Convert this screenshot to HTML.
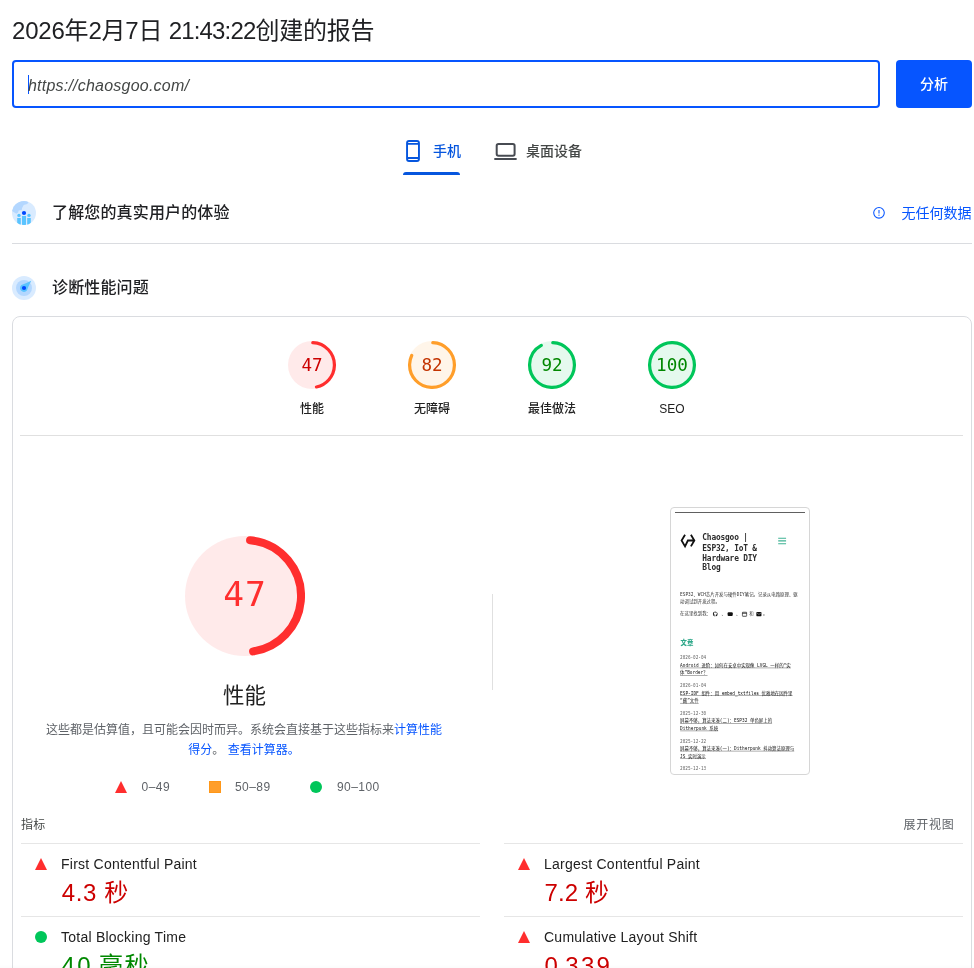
<!DOCTYPE html>
<html lang="zh-CN">
<head>
<meta charset="utf-8">
<title>PageSpeed Insights</title>
<style>
*{box-sizing:border-box;margin:0;padding:0}
html,body{width:974px;height:968px;overflow:hidden;background:#fff}
body{position:relative;font-family:"Liberation Sans","Noto Sans CJK SC",sans-serif;color:#202124;-webkit-font-smoothing:antialiased}
.abs{position:absolute;white-space:nowrap}
.mono{font-family:"DejaVu Sans Mono","Liberation Mono","Noto Sans CJK SC",monospace}
.hr{position:absolute;height:1px;background:#dadce0}
.title{left:12px;top:12.5px;font-size:24px;line-height:36px;color:#202124;letter-spacing:-0.2px}
.urlbox{left:12px;top:60px;width:868px;height:48px;border:2px solid #0655ff;border-radius:4px;background:#fff}
.urltext{left:28px;top:73.5px;font-size:16px;line-height:24px;font-style:italic;color:#444746;letter-spacing:.22px}
.caret{left:28px;top:75px;width:1px;height:19px;background:#0655ff}
.btn{left:896px;top:60px;width:76px;height:48px;border-radius:4px;background:#0655ff;color:#fff;font-size:14px;line-height:48px;text-align:center;font-weight:500}
.tab{font-size:14px;line-height:20px;font-weight:500}
.sec{font-size:16px;line-height:24px;color:#202124;font-weight:500;letter-spacing:.15px}
.card{position:absolute;left:12px;top:316px;width:960px;height:700px;border:1px solid #dadce0;border-radius:8px}
.glabel{font-size:12px;line-height:16px;color:#212121;text-align:center;width:120px;font-weight:500}
.gnum{font-size:17.6px;line-height:20px;text-align:center;width:60px}
.small{font-size:12px;line-height:20px;color:#5f6368}
.mlabel{font-size:14px;line-height:20px;color:#212121;letter-spacing:.24px}
.mval{font-size:24px;line-height:32px;letter-spacing:.6px}
a{color:#0655ff;text-decoration:none}
.tmono{font-family:"DejaVu Sans Mono","Liberation Mono","Noto Sans CJK SC",monospace}
.tp{font-family:"DejaVu Sans Mono","Liberation Mono","Noto Sans CJK SC",monospace;font-size:13.2px;line-height:20px;color:#333}
.td{font-family:"DejaVu Sans Mono","Liberation Mono","Noto Sans CJK SC",monospace;font-size:12.9px;line-height:20px;color:#666}
.ta{font-family:"DejaVu Sans Mono","Liberation Mono","Noto Sans CJK SC",monospace;font-size:13.2px;line-height:20px;color:#111;text-decoration:underline;text-underline-offset:3px;text-decoration-thickness:1.2px}
</style>
</head>
<body>
<div id="root" style="position:absolute;left:0;top:0;width:974px;height:968px;will-change:transform">

<div class="abs title">2026年2月7日 <span style="letter-spacing:-0.85px">21:43:22</span>创建的报告</div>

<div class="abs urlbox"></div>
<div class="abs caret"></div>
<div class="abs urltext">https://chaosgoo.com/</div>
<div class="abs btn">分析</div>

<!-- tabs -->
<svg class="abs" style="left:403px;top:139px" width="20" height="24" viewBox="0 0 20 24"><rect x="4.050" y="1.950" width="11.900" height="20" rx="2" fill="none" stroke="#0656de" stroke-width="1.900"/><path d="M4 4.900H16M4 19H16" stroke="#0656de" stroke-width="1.900"/></svg>
<div class="abs tab" style="left:433px;top:141px;color:#0656de">手机</div>
<div class="abs" style="left:403px;top:172px;width:57px;height:3px;background:#0656de;border-radius:3px 3px 0 0"></div>
<svg class="abs" style="left:494px;top:141px" width="24" height="20" viewBox="0 0 24 20"><rect x="2.700" y="3" width="17.900" height="11.800" rx="1.800" fill="none" stroke="#474b52" stroke-width="2"/><path d="M.3 18H22.650" stroke="#474b52" stroke-width="2"/></svg>
<div class="abs tab" style="left:526px;top:141px;color:#444746">桌面设备</div>

<!-- section 1 -->
<svg class="abs" style="left:12px;top:201px" width="24" height="24" viewBox="0 0 24 24">
<defs><clipPath id="c1"><circle cx="12" cy="12" r="12"/></clipPath></defs>
<circle cx="12" cy="12" r="12" fill="#d9ebff"/>
<g clip-path="url(#c1)">
<path d="M-1 9.300L4.300 12.800L6.100 11.500L6.700 9.600L9.700 9L10.100 6.900L11.700 4L15.300 3.100L16.600 .85L12-1L-1-1Z" fill="#b3d7ff"/>
<rect x="5.2" y="17" width="3.6" height="8" fill="#5ac4ff"/>
<rect x="10" y="15" width="4" height="10" fill="#5ac4ff"/>
<rect x="15.2" y="17" width="3.6" height="8" fill="#5ac4ff"/>
<circle cx="7" cy="14.4" r="1.7" fill="#5ac4ff"/>
<circle cx="17" cy="14.4" r="1.7" fill="#5ac4ff"/>
<circle cx="12" cy="12" r="2.1" fill="#0048ff"/>
</g>
</svg>
<div class="abs sec" style="left:52px;top:200.8px">了解您的真实用户的体验</div>
<svg class="abs" style="left:872px;top:206px" width="14" height="14" viewBox="0 0 14 14"><circle cx="7" cy="6.800" r="5.300" fill="none" stroke="#0655ff" stroke-width="1.050"/><path d="M7 4.100V7.500" stroke="#0655ff" stroke-width="1.050"/><circle cx="7" cy="9.200" r=".62" fill="#0655ff"/></svg>
<div class="abs" style="left:901.4px;top:203px;font-size:14px;line-height:20px;color:#0655ff;font-weight:400;letter-spacing:.05px">无任何数据</div>
<div class="hr" style="left:12px;top:243px;width:960px"></div>

<!-- section 2 -->
<svg class="abs" style="left:12px;top:276px" width="24" height="24" viewBox="0 0 24 24">
<circle cx="12" cy="12" r="12" fill="#d9ebff"/>
<circle cx="12" cy="12" r="8" fill="#b3d7ff"/>
<path d="M19.200 4.800Q16.500 10 14.900 14.600A3.900 3.900 0 1 1 9.400 9.100Q14 7.500 19.200 4.800Z" fill="#5ac4ff"/>
<circle cx="12" cy="12" r="2.1" fill="#0048ff"/>
</svg>
<div class="abs sec" style="left:52px;top:275.8px">诊断性能问题</div>

<div class="card"></div>

<!-- gauges -->
<svg class="abs" style="left:288px;top:341px" width="48" height="48" viewBox="0 0 120 120"><circle cx="60" cy="60" r="60" fill="#ff2e2e" fill-opacity="0.1"/><circle cx="60" cy="60" r="56" fill="none" stroke="#ff2e2e" stroke-width="8" stroke-linecap="round" stroke-dasharray="161.37 351.86" transform="rotate(-87.9537 60 60)"/></svg>
<div class="abs mono gnum" style="left:282px;top:355px;color:#cc0000">47</div>
<div class="abs glabel" style="left:252px;top:401px">性能</div>
<svg class="abs" style="left:408px;top:341px" width="48" height="48" viewBox="0 0 120 120"><circle cx="60" cy="60" r="60" fill="#ff9e2a" fill-opacity="0.1"/><circle cx="60" cy="60" r="56" fill="none" stroke="#ff9e2a" stroke-width="8" stroke-linecap="round" stroke-dasharray="284.52 351.86" transform="rotate(-87.9537 60 60)"/></svg>
<div class="abs mono gnum" style="left:402px;top:355px;color:#c33300">82</div>
<div class="abs glabel" style="left:372px;top:401px">无障碍</div>
<svg class="abs" style="left:528px;top:341px" width="48" height="48" viewBox="0 0 120 120"><circle cx="60" cy="60" r="60" fill="#00c65a" fill-opacity="0.1"/><circle cx="60" cy="60" r="56" fill="none" stroke="#00c65a" stroke-width="8" stroke-linecap="round" stroke-dasharray="319.71 351.86" transform="rotate(-87.9537 60 60)"/></svg>
<div class="abs mono gnum" style="left:522px;top:355px;color:#008800">92</div>
<div class="abs glabel" style="left:492px;top:401px">最佳做法</div>
<svg class="abs" style="left:648px;top:341px" width="48" height="48" viewBox="0 0 120 120"><circle cx="60" cy="60" r="60" fill="#00c65a" fill-opacity="0.1"/><circle cx="60" cy="60" r="56" fill="none" stroke="#00c65a" stroke-width="8" stroke-linecap="round" stroke-dasharray="351.86 351.86" transform="rotate(-87.9537 60 60)"/></svg>
<div class="abs mono gnum" style="left:642px;top:355px;color:#008800">100</div>
<div class="abs glabel" style="left:612px;top:401px">SEO</div>
<div class="hr" style="left:20px;top:435px;width:943px;background:#e0e0e0"></div>

<!-- big gauge -->
<svg class="abs" style="left:184.6px;top:536.3px" width="120" height="120" viewBox="0 0 120 120"><circle cx="60" cy="60" r="60" fill="#ff2e2e" fill-opacity="0.1"/><circle cx="60" cy="60" r="56" fill="none" stroke="#ff2e2e" stroke-width="8" stroke-linecap="round" stroke-dasharray="162.40 351.86" transform="rotate(-84.8 60 60)"/></svg>
<div class="abs mono" style="left:184.6px;top:573.6px;width:120px;padding-left:1px;text-align:center;font-size:34.6px;letter-spacing:1px;line-height:40px;color:#ff2e2e">47</div>
<div class="abs" style="left:144.5px;top:679.7px;width:200px;text-align:center;font-size:21.5px;line-height:32px;color:#212121">性能</div>
<div class="abs small" style="left:44px;top:719.7px;width:400px;text-align:center;white-space:normal">这些都是估算值，且可能会因时而异。系统会直接基于这些指标来<a>计算性能得分</a>。 <a>查看计算器。</a></div>
<svg class="abs" style="left:114px;top:780px" width="14" height="14" viewBox="0 0 14 14"><path d="M7 1L13 13H1Z" fill="#ff2e2e"/></svg>
<div class="abs small" style="left:141.6px;top:776.8px;letter-spacing:.45px">0–49</div>
<div class="abs" style="left:209px;top:781px;width:12px;height:12px;background:#ff9e2a;border:1px solid #ff9718"></div>
<div class="abs small" style="left:235px;top:776.8px;letter-spacing:.45px">50–89</div>
<div class="abs" style="left:310px;top:781px;width:12px;height:12px;border-radius:50%;background:#00c65a"></div>
<div class="abs small" style="left:337px;top:776.8px;letter-spacing:.45px">90–100</div>
<div class="abs" style="left:492px;top:594px;width:1px;height:96px;background:#e0e0e0"></div>

<!-- thumbnail -->
<div class="abs" style="left:670px;top:507px;width:140px;height:268px;border:1px solid #d6d6d6;border-radius:4px;background:#fff;overflow:hidden"></div>
<div class="abs" style="left:675px;top:512px;width:130px;height:1px;background:#606060;z-index:2"></div>
<div class="abs thumb" style="left:671px;top:508px;width:412px;height:794px;transform:scale(0.335);transform-origin:0 0;overflow:hidden;border-radius:9px">

<svg class="abs" style="left:0;top:0" width="120" height="130" viewBox="0 0 120 130"><path d="M41.9 80L31.6 97L41.9 114.5L50.4 97H69.7M59.4 80L69.7 97L59.4 114.5" fill="none" stroke="#111" stroke-width="5.4" stroke-linejoin="miter" stroke-linecap="butt"/></svg>
<div class="abs tmono" style="left:93.4px;top:75.4px;font-size:23.4px;letter-spacing:-.5px;line-height:29.4px;font-weight:700;color:#2b2b2b;white-space:pre">Chaosgoo |</div>
<div class="abs tmono" style="left:93.4px;top:105.0px;font-size:23.4px;letter-spacing:-.5px;line-height:29.4px;font-weight:700;color:#2b2b2b;white-space:pre">ESP32, IoT &amp;</div>
<div class="abs tmono" style="left:93.4px;top:134.6px;font-size:23.4px;letter-spacing:-.5px;line-height:29.4px;font-weight:700;color:#2b2b2b;white-space:pre">Hardware DIY</div>
<div class="abs tmono" style="left:93.4px;top:164.2px;font-size:23.4px;letter-spacing:-.5px;line-height:29.4px;font-weight:700;color:#2b2b2b;white-space:pre">Blog</div>
<svg class="abs" style="left:310px;top:80px" width="44" height="36" viewBox="0 0 44 36"><path d="M10 10.4H33.500M10 18.200H33.500M10 26.600H33.500" stroke="#3fb294" stroke-width="3.200" fill="none"/></svg>
<div class="abs tp" style="left:27.2px;top:248.2px;">ESP32、WCH芯片开发与硬件DIY笔记。记录从电路原理、驱</div>
<div class="abs tp" style="left:27.2px;top:271.2px;">动调试到开发过程。</div>
<div class="abs tp" style="left:27.2px;top:306.4px;">在这里找到我：</div>
<svg class="abs" style="left:124.3px;top:307.9px" width="17" height="17" viewBox="0 0 14 14"><path d="M7 .8a6.3 6.3 0 0 0-2 12.3v-2.3c-1.700.4-2.200-.8-2.200-.8l-.9-1.100h1.400l1 1.200c.8.500 1.600.300 1.900.100l.4-1C4.500 8.900 3.200 8 3.200 5.900l.7-1.800-.1-1.600 1.700.7a5.800 5.800 0 0 1 3 0l1.700-.7-.1 1.600.7 1.800C10.800 8 9.500 8.900 7.400 9.200l.6 1.400v2.500A6.300 6.300 0 0 0 7 .8z" fill="#111"/></svg>
<div class="abs tp" style="left:150.7px;top:306.4px;">、</div>
<svg class="abs" style="left:167.6px;top:307.9px" width="17" height="17" viewBox="0 0 14 14"><rect x=".5" y="2.500" width="13" height="9.500" rx="2.800" fill="#111"/></svg>
<div class="abs tp" style="left:194.0px;top:306.4px;">、</div>
<svg class="abs" style="left:210.6px;top:307.9px" width="17" height="17" viewBox="0 0 14 14"><rect x="1.500" y="2.500" width="11" height="10" rx="1.500" fill="none" stroke="#111" stroke-width="1.800"/><path d="M1.500 5.200H12.500" stroke="#111" stroke-width="1.800"/></svg>
<div class="abs tp" style="left:233.7px;top:306.4px;">和</div>
<svg class="abs" style="left:254.2px;top:307.9px" width="17" height="17" viewBox="0 0 14 14"><rect x=".5" y="2.200" width="13" height="10" rx="1.500" fill="#111"/><path d="M1.500 4L7 8L12.500 4" fill="none" stroke="#fff" stroke-width="1"/></svg>
<div class="abs tp" style="left:274.6px;top:306.4px;">。</div>
<div class="abs" style="left:28.6px;top:387.8px;font-size:19px;line-height:28px;font-weight:900;color:#2fa88a">文章</div>
<div class="abs td" style="left:27.2px;top:438.1px;">2026-02-04</div>
<div class="abs ta" style="left:27.2px;top:460.2px;">Android 进阶：如何在安卓中实现像 LVGL 一样的“实</div>
<div class="abs ta" style="left:27.2px;top:482.7px;">体”Border？</div>
<div class="abs td" style="left:27.2px;top:520.7px;">2026-01-04</div>
<div class="abs ta" style="left:27.2px;top:542.8px;">ESP-IDF 组件：用 embed_txtfiles 优雅地在固件里</div>
<div class="abs ta" style="left:27.2px;top:565.3px;">“藏”文件</div>
<div class="abs td" style="left:27.2px;top:603.3px;">2025-12-30</div>
<div class="abs ta" style="left:27.2px;top:625.4px;">屏幕不够，算法来凑(二)：ESP32 单色屏上的</div>
<div class="abs ta" style="left:27.2px;top:647.9px;">Ditherpunk 系统</div>
<div class="abs td" style="left:27.2px;top:685.9px;">2025-12-22</div>
<div class="abs ta" style="left:27.2px;top:708.0px;">屏幕不够，算法来凑(一)：Ditherpunk 抖动算法原理与</div>
<div class="abs ta" style="left:27.2px;top:730.5px;">JS 实时演示</div>
<div class="abs td" style="left:27.2px;top:768.5px;">2025-12-13</div>
</div>

<!-- metrics -->
<div class="abs small" style="left:21px;top:815px;color:#444746;letter-spacing:.3px">指标</div>
<div class="abs small" style="left:903.6px;top:815px;color:#5f6368;letter-spacing:.7px">展开视图</div>
<div class="hr" style="left:21px;top:843px;width:459px;background:#e6e6e6"></div>
<div class="hr" style="left:504px;top:843px;width:459px;background:#e6e6e6"></div>
<div class="hr" style="left:21px;top:916px;width:459px;background:#e6e6e6"></div>
<div class="hr" style="left:504px;top:916px;width:459px;background:#e6e6e6"></div>
<svg class="abs" style="left:34px;top:857px" width="14" height="14" viewBox="0 0 14 14"><path d="M7 1L13 13H1Z" fill="#ff2e2e"/></svg>
<div class="abs mlabel" style="left:61px;top:854px">First Contentful Paint</div>
<div class="abs mval" style="left:61.8px;top:877px;color:#cc0000">4.3 秒</div>
<svg class="abs" style="left:517px;top:857px" width="14" height="14" viewBox="0 0 14 14"><path d="M7 1L13 13H1Z" fill="#ff2e2e"/></svg>
<div class="abs mlabel" style="left:544px;top:854px">Largest Contentful Paint</div>
<div class="abs mval" style="left:544.6px;top:877px;color:#cc0000;letter-spacing:.1px">7.2 秒</div>
<div class="abs" style="left:35px;top:931px;width:12px;height:12px;border-radius:50%;background:#00c65a"></div>
<div class="abs mlabel" style="left:61px;top:927px">Total Blocking Time</div>
<div class="abs mval" style="left:61.5px;top:950px;color:#008800;letter-spacing:1.5px"><span style="letter-spacing:2.4px">4</span>0<span style="letter-spacing:.1px"> </span>毫秒</div>
<svg class="abs" style="left:517px;top:930px" width="14" height="14" viewBox="0 0 14 14"><path d="M7 1L13 13H1Z" fill="#ff2e2e"/></svg>
<div class="abs mlabel" style="left:544px;top:927px">Cumulative Layout Shift</div>
<div class="abs mval" style="left:544.4px;top:950px;color:#cc0000;letter-spacing:2.2px">0<span style="letter-spacing:-1.3px">.</span>339</div>

<div class="abs" style="left:0;top:964px;width:974px;height:4px;background:linear-gradient(to bottom,rgba(0,0,0,0),rgba(0,0,0,.012))"></div>
</div>
</body>
</html>
